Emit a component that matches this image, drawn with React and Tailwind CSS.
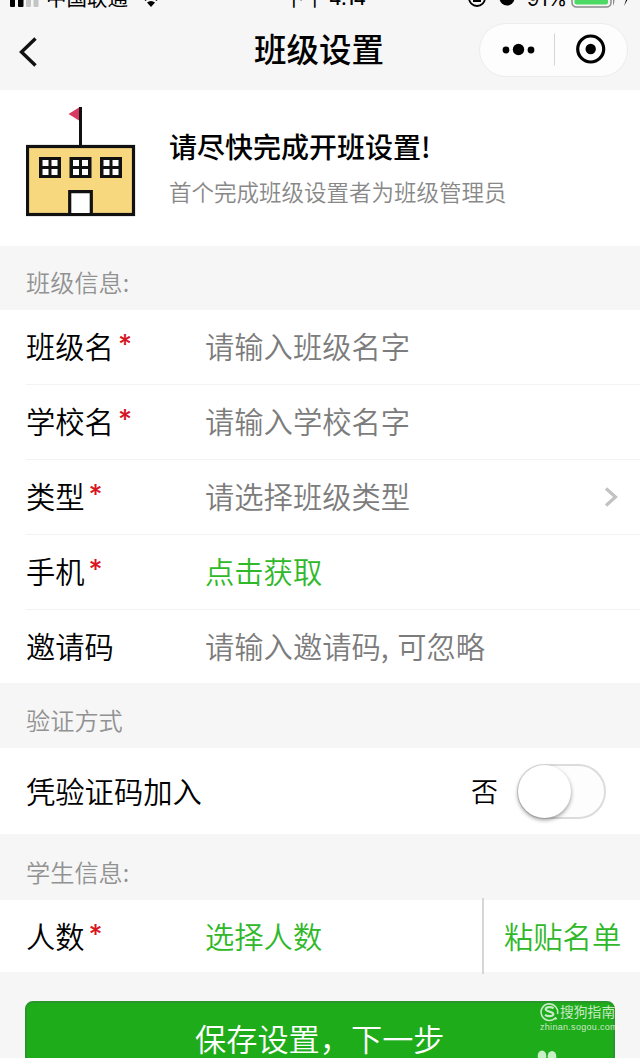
const CJK = "font-['Noto_Sans_CJK_SC',sans-serif]";

function StatusBar() {
  return (
    <div className="flex h-[10px] items-end overflow-hidden text-[20.5px] leading-[26px] text-black">
      <div className="flex h-[26px] w-[284px] shrink-0 items-center pl-[10px]">
        <svg width="29" height="26" viewBox="0 0 29 26" className="shrink-0">
          <rect x="0" y="12" width="5" height="11" rx="1" />
          <rect x="8" y="9" width="5.5" height="14" rx="1" />
          <rect x="16" y="6" width="5" height="17" rx="1" fill="#c4c4c4" />
          <rect x="23.500" y="3" width="5" height="20" rx="1" fill="#c4c4c4" />
        </svg>
        <span className="-mt-px ml-[7px] whitespace-nowrap">中国联通</span>
        <svg width="24" height="26" viewBox="0 0 24 26" className="ml-[11px] shrink-0" fill="none" stroke="#000" strokeWidth="3">
          <path d="M1 11a15 15 0 0 1 22 0M5.500 16a9 9 0 0 1 13 0" />
          <path d="M12 23l-4-4.500a6 6 0 0 1 8 0z" fill="#000" stroke="none" />
        </svg>
      </div>
      <div className="flex h-[26px] w-[183px] shrink-0 whitespace-nowrap">
        <span>下午</span>
        <span className="mt-[2px] h-[24px] pl-[4px] font-['Inter',sans-serif] text-[19px] font-medium tracking-[-0.5px]">4:14</span>
      </div>
      <div className="flex h-[26px] shrink-0 items-center">
        <svg width="50" height="26" viewBox="0 0 50 26" fill="none" stroke="#000">
          <circle cx="10" cy="14" r="8" strokeWidth="1.800" />
          <rect x="6" y="11" width="8" height="7" fill="#000" stroke="none" />
          <circle cx="40" cy="14" r="7.500" fill="#000" stroke="none" />
        </svg>
        <span className="ml-[10px] mt-[4px] w-[44px] whitespace-nowrap font-['Inter',sans-serif] text-[20px]">91%</span>
        <svg width="60" height="26" viewBox="0 0 60 26" fill="none">
          <rect x="1" y="2" width="39" height="21" rx="4.500" stroke="#8c8c8c" strokeWidth="1.500" />
          <rect x="3.500" y="4" width="33.500" height="16.500" rx="2" fill="#4cd964" />
          <path d="M42 10v12q3-6 0-12z" fill="#8c8c8c" />
          <path d="M57 8l-5 8h3l-2 6 5-9h-3z" fill="#000" />
        </svg>
      </div>
    </div>
  );
}

function NavBar() {
  return (
    <div className="flex h-[80px] items-center">
      <div className="flex w-[254px] pl-[18px] pt-[4px]">
        <svg width="20" height="32" viewBox="0 0 20 32" fill="none" stroke="#111" strokeWidth="3.400">
          <path d="M17.500 2.500L3.500 16l14 13.500" />
        </svg>
      </div>
      <h1 className="-mt-[4px] w-[225px] whitespace-nowrap text-[32.500px] font-medium leading-[48px] text-black">班级设置</h1>
      <div className="flex h-[54px] w-[149px] items-center rounded-full border border-[#ececec] bg-[#fdfdfd]">
        <svg width="147" height="52" viewBox="0 0 147 52">
          <circle cx="26" cy="26" r="3.400" />
          <circle cx="38.500" cy="25.500" r="5.700" />
          <circle cx="51" cy="26" r="3.400" />
          <path d="M74.500 9.500v32" stroke="#d4d4d4" />
          <circle cx="110.700" cy="25" r="13" fill="none" stroke="#000" strokeWidth="3.200" />
          <circle cx="110.700" cy="25" r="5.200" />
        </svg>
      </div>
    </div>
  );
}

function SchoolWindow({ x }) {
  return (
    <g>
      <rect x={x} y="50" width="22" height="21" fill="#111" />
      <rect x={x + 3.5} y="53" width="6" height="6" fill="#fff" />
      <rect x={x + 12.500} y="53" width="6" height="6" fill="#fff" />
      <rect x={x + 3.5} y="62" width="6" height="6" fill="#fff" />
      <rect x={x + 12.500} y="62" width="6" height="6" fill="#fff" />
    </g>
  );
}

function School() {
  return (
    <svg width="110" height="110" viewBox="0 0 110 110" className="shrink-0">
      <path d="M54.500 0v39" stroke="#111" strokeWidth="3" />
      <path d="M53 .5v13L42.500 7z" fill="#d83a62" />
      <rect x="1.500" y="39.500" width="106" height="68" fill="#f8d87f" stroke="#111" strokeWidth="3.200" />
      <SchoolWindow x={13} />
      <SchoolWindow x={43.5} />
      <SchoolWindow x={74} />
      <path d="M43.700 107.500V84.700h21.600v22.800" fill="#fff" stroke="#111" strokeWidth="3.200" />
      <path d="M0 107.500h109" stroke="#111" strokeWidth="3.200" />
    </svg>
  );
}

function Hero() {
  return (
    <section className="flex h-[156px] bg-white pl-[26px] pt-[17px]">
      <School />
      <div className="pl-[33px] pt-[19px]">
        <h2 className="text-[28px] font-medium leading-[40px] text-black">请尽快完成开班设置!</h2>
        <p className="mt-[8px] text-[22.500px] font-[350] leading-[34px] text-[#888]">首个完成班级设置者为班级管理员</p>
      </div>
    </section>
  );
}

function SectionTitle({ children, className }) {
  return (
    <div className={`flex items-center bg-[#f6f6f6] pl-[26px] text-[24.200px] font-[350] text-[#929292] ${className}`}>
      {children}
    </div>
  );
}

function Label({ text, required }) {
  return (
    <div className="flex w-[179px] shrink-0 items-center font-[350] text-black">
      <span>{text}</span>
      {required && <span className="ml-[4px] font-['Inter',sans-serif] text-[27px] font-medium text-[#d8141f]">*</span>}
    </div>
  );
}

function Row({ label, required, value, action, chevron, last }) {
  return (
    <div className="pl-[26px]">
      <div className={`flex items-center pb-[4px] pr-[21px] ${last ? "h-[73px]" : "h-[75px] border-b border-[#f3f3f3]"}`}>
        <Label text={label} required={required} />
        <span className={`grow font-[350] ${action ? "text-[#2fb829]" : "text-[#7c7c7c]"}`}>{value}</span>
        {chevron && (
          <svg width="16" height="22" viewBox="0 0 16 22" fill="none" stroke="#c2c2c2" strokeWidth="3.200" className="mt-[3px]">
            <path d="M3 2.500l9.500 8.500L3 19.500" />
          </svg>
        )}
      </div>
    </div>
  );
}

const fields = [
  { label: "班级名", required: true, value: "请输入班级名字" },
  { label: "学校名", required: true, value: "请输入学校名字" },
  { label: "类型", required: true, value: "请选择班级类型", chevron: true },
  { label: "手机", required: true, value: "点击获取", action: true },
  { label: "邀请码", value: <>请输入邀请码, <span className="ml-[2px]">可忽略</span></>, last: true },
];

function Watermark() {
  return (
    <div className="absolute left-[513px] top-[-2px] text-white/75">
      <div className="flex items-center">
        <svg width="19" height="20" viewBox="0 0 19 20" fill="none" stroke="currentColor" className="shrink-0">
          <path d="M15 16.300A8.300 8.300 0 1 1 17.500 12" strokeWidth="1.600" />
          <path d="M13.500 6.300C11 4.500 5.500 4.800 5.800 7.500c.3 2.500 7.500 1.700 7.500 4.500 0 2.500-5.500 2.800-8.300.8" strokeWidth="2.200" />
          <path d="M14.800 15.500l1.800 1.800" strokeWidth="2" />
        </svg>
        <span className="ml-px -mt-px whitespace-nowrap text-[13.800px] leading-[22px]">搜狗指南</span>
      </div>
      <div className="whitespace-nowrap font-['Liberation_Sans',sans-serif] text-[9px] leading-[10px] tracking-[0.300px]">zhinan.sogou.com</div>
      <svg width="20" height="10" viewBox="0 0 20 10" className="-ml-[3px] mt-[18px] block">
        <ellipse cx="5" cy="6" rx="4.300" ry="5.500" fill="#c9efc6" />
        <ellipse cx="15" cy="6.500" rx="4.300" ry="5.500" fill="#c9efc6" />
      </svg>
    </div>
  );
}

export default function App() {
  return (
    <div className={`h-[1058px] w-[640px] overflow-hidden bg-[#f6f6f6] ${CJK}`}>
      <StatusBar />
      <NavBar />
      <Hero />
      <SectionTitle className="h-[64px] pt-[9px]">班级信息:</SectionTitle>
      <section className="bg-white text-[29.300px] leading-[42px]">
        {fields.map((f) => (
          <Row key={f.label} {...f} />
        ))}
      </section>
      <SectionTitle className="h-[65px] pt-[9px]">验证方式</SectionTitle>
      <section className="flex h-[86px] items-center bg-white pl-[26px] pr-[34px] text-[29.300px] leading-[42px] text-black">
        <span className="-mt-[3px] grow font-[350]">凭验证码加入</span>
        <span className="text-[27px] font-[350]">否</span>
        <div className="ml-[19px] h-[55px] w-[89px] rounded-full border-2 border-[#dcdcdc] bg-[#fdfdfd]">
          <div className="-ml-px -mt-px h-[53px] w-[53px] rounded-full bg-white shadow-[0_2px_4px_rgba(0,0,0,0.4)]" />
        </div>
      </section>
      <SectionTitle className="h-[66px] pt-[10px]">学生信息:</SectionTitle>
      <section className="flex h-[72px] items-center bg-white pl-[26px] text-[29.300px] leading-[42px]">
        <div className="-mt-[2px] flex">
          <Label text="人数" required />
          <span className="w-[277px] font-[350] text-[#2fb829]">选择人数</span>
        </div>
        <div className="-my-[2px] flex h-[76px] items-center border-l-2 border-[#d6d6d6] pb-[2px] pl-[20px] font-[350] text-[#2fb829]">粘贴名单</div>
      </section>
      <div className="relative mx-[25px] mt-[29px] h-[90px] w-[590px] rounded-[8px] border-2 border-[#28962a] bg-[#1fac1b] text-white">
        <div className="whitespace-nowrap pl-[168px] pt-[12px] text-[31.200px] font-[350] leading-[46px]">保存设置，下一步</div>
        <Watermark />
      </div>
    </div>
  );
}
